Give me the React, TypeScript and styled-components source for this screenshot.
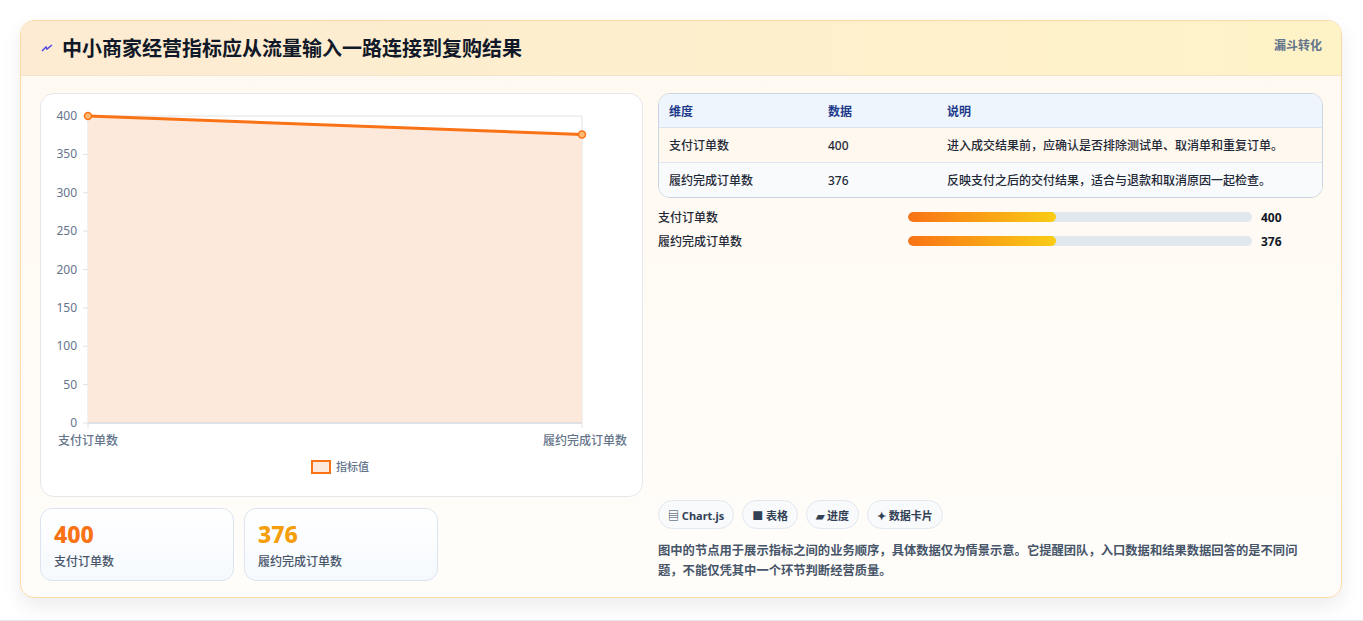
import React from 'react';
import styled, { createGlobalStyle } from 'styled-components';

const GlobalStyle = createGlobalStyle`
  body { margin: 0; background: #f3f4f6; font-family: "Noto Sans", "Noto Sans CJK SC", sans-serif; }
`;

const Page = styled.div`
  width: 1363px; height: 621px; box-sizing: border-box;
  padding: 20px 21px 22px 20px; background: #fff;
  border-bottom: 1px solid #e5e7eb;
`;

const Card = styled.div`
  height: 100%; box-sizing: border-box;
  border: 1px solid #fbd9a8; border-radius: 14px; overflow: hidden;
  background: linear-gradient(180deg, #fff9f0 0%, #fffdfa 100%);
  box-shadow: 0 8px 20px rgba(0,0,0,0.08);
  display: flex; flex-direction: column;
`;

const Header = styled.div`
  height: 55px; flex-shrink: 0; box-sizing: border-box;
  background: linear-gradient(90deg, #fdebd3 0%, #fef3c7 100%);
  border-bottom: 1px solid #f3e3cf;
  display: flex; justify-content: space-between; padding: 0 19px 0 20px;
`;

const Title = styled.h1`
  margin: 0; font-size: 20px; font-weight: 700; color: #111827;
  display: flex; align-items: center; gap: 9px; line-height: 55px;
`;

const Tag = styled.span`
  font-size: 12px; font-weight: 700; color: #64748b; margin-top: 15px;
`;

const Body = styled.div`
  flex: 1; display: grid; grid-template-columns: 603px 1fr; gap: 15px;
  padding: 17px 18px 18px 19px;
`;

const Col = styled.div`
  display: flex; flex-direction: column; min-height: 0;
`;

const ChartPanel = styled.div`
  height: 404px; box-sizing: border-box; background: #fff;
  border: 1px solid #e5e7eb; border-radius: 14px;
`;

const Stats = styled.div`
  display: flex; gap: 10px; margin-top: 11px;
`;

const StatCard = styled.div`
  width: 194px; height: 73px; box-sizing: border-box; padding: 10px 13px;
  border: 1px solid #dbe4ef; border-radius: 12px;
  background: linear-gradient(180deg, #fff 0%, #f5f9fd 100%);
`;

const StatValue = styled.div<{ $c: string }>`
  font-size: 23px; font-weight: 800; color: ${p => p.$c}; line-height: 30px;
`;

const StatLabel = styled.div`
  font-size: 12px; color: #475569; margin-top: 3px; font-weight: 500;
`;

const Table = styled.div`
  border: 1px solid #cbd5e1; border-radius: 12px; overflow: hidden;
`;

const Row = styled.div<{ $bg: string; $head?: boolean }>`
  display: grid; grid-template-columns: 159px 119px 1fr;
  height: ${p => (p.$head ? 33 : 34)}px; align-items: center; padding-left: 10px;
  background: ${p => p.$bg}; font-size: 12px;
  color: ${p => (p.$head ? '#1e3a8a' : '#1f2937')};
  font-weight: ${p => (p.$head ? 600 : 500)};
  & + & { border-top: 1px solid #dbe4ef; }
`;

const Bars = styled.div`
  display: flex; flex-direction: column; gap: 8px; margin-top: 10px;
`;

const BarRow = styled.div`
  display: grid; grid-template-columns: 250px 344px 1fr; align-items: center;
  font-size: 12px; font-weight: 500; color: #1f2937; height: 16px;
`;

const Track = styled.div`
  height: 10px; border-radius: 5px; background: #e2e8f0; overflow: hidden;
`;

const Fill = styled.div`
  height: 100%; border-radius: 5px; background: linear-gradient(90deg, #f97316, #facc15);
`;

const BarNum = styled.span`
  font-weight: 700; padding-left: 9px; color: #111827;
`;

const Chips = styled.div`
  display: flex; gap: 8px; margin-top: auto;
`;

const Chip = styled.span`
  height: 29px; box-sizing: border-box; padding: 0 9px; border-radius: 15px;
  border: 1px solid #e2e8f0; background: #f8fafc;
  display: inline-flex; align-items: center; gap: 3px;
  font-size: 11px; font-weight: 700; color: #334155;
`;

const Note = styled.p`
  margin: 12px 0 0; padding-right: 4px; font-size: 12.3px; line-height: 20px;
  color: #475569; font-weight: 600;
`;

const Chart: React.FC = () => {
  const x0 = 47, x1 = 541, yTop = 22, yBot = 329;
  const ys = [400, 350, 300, 250, 200, 150, 100, 50, 0];
  const yOf = (v: number) => yBot - (v / 400) * (yBot - yTop);
  return (
    <svg width="601" height="402" style={{ display: 'block', fontFamily: 'Noto Sans, Noto Sans CJK SC, sans-serif' }}>
      {ys.map(v => (
        <g key={v}>
          <line x1={x0 - 5} x2={x1} y1={yOf(v)} y2={yOf(v)} stroke="#e2e2e2" />
          <text x={x0 - 11} y={yOf(v) + 4} fontSize="12" fill="#64748b" textAnchor="end">{v}</text>
        </g>
      ))}
      <line x1={x0} x2={x0} y1={yTop} y2={yBot + 5} stroke="#e2e2e2" />
      <line x1={x1} x2={x1} y1={yTop} y2={yBot + 5} stroke="#e2e2e2" />
      <polygon points={`${x0},${yOf(400)} ${x1},${yOf(376)} ${x1},${yBot} ${x0},${yBot}`} fill="#fde9dc" />
      <line x1={x0} x2={x1} y1={yBot} y2={yBot} stroke="#cbd5e1" />
      <line x1={x0} x2={x1} y1={yOf(400)} y2={yOf(376)} stroke="#f97316" strokeWidth="3" />
      <circle cx={x0} cy={yOf(400)} r="3.5" fill="#fdba74" stroke="#f97316" strokeWidth="1.5" />
      <circle cx={x1} cy={yOf(376)} r="3.5" fill="#fdba74" stroke="#f97316" strokeWidth="1.5" />
      <text x={x0} y={351} fontSize="12" fontWeight="500" fill="#64748b" textAnchor="middle">支付订单数</text>
      <text x={x1 + 3} y={351} fontSize="12" fontWeight="500" fill="#64748b" textAnchor="middle">履约完成订单数</text>
      <rect x={271} y={367} width={18} height={12} fill="#fde9dc" stroke="#f97316" strokeWidth="2" />
      <text x={295} y={377} fontSize="11" fontWeight="500" fill="#64748b">指标值</text>
    </svg>
  );
};

export default function App() {
  const rows = [
    { name: '支付订单数', v: 400, d: '进入成交结果前，应确认是否排除测试单、取消单和重复订单。', bg: '#fff8ee' },
    { name: '履约完成订单数', v: 376, d: '反映支付之后的交付结果，适合与退款和取消原因一起检查。', bg: '#f8fafc' },
  ];
  return (
    <>
      <GlobalStyle />
      <Page>
        <Card>
          <Header>
            <Title>
              <svg width="12" height="10" viewBox="0 0 12 10"><path d="M1 8 L5 4 L6 6 L11 2" stroke="#4f46e5" strokeWidth="1.5" fill="none" /></svg>
              中小商家经营指标应从流量输入一路连接到复购结果
            </Title>
            <Tag>漏斗转化</Tag>
          </Header>
          <Body>
            <Col>
              <ChartPanel><Chart /></ChartPanel>
              <Stats>
                <StatCard><StatValue $c="#f97316">400</StatValue><StatLabel>支付订单数</StatLabel></StatCard>
                <StatCard><StatValue $c="#f59e0b">376</StatValue><StatLabel>履约完成订单数</StatLabel></StatCard>
              </Stats>
            </Col>
            <Col>
              <Table>
                <Row $bg="#eef5fd" $head><span>维度</span><span>数据</span><span>说明</span></Row>
                {rows.map(r => (
                  <Row key={r.name} $bg={r.bg}><span>{r.name}</span><span>{r.v}</span><span>{r.d}</span></Row>
                ))}
              </Table>
              <Bars>
                {rows.map(r => (
                  <BarRow key={r.name}>
                    <span>{r.name}</span>
                    <Track><Fill style={{ width: '43%' }} /></Track>
                    <BarNum>{r.v}</BarNum>
                  </BarRow>
                ))}
              </Bars>
              <Chips>
                <Chip>▤ Chart.js</Chip>
                <Chip>■ 表格</Chip>
                <Chip>▰ 进度</Chip>
                <Chip>✦ 数据卡片</Chip>
              </Chips>
              <Note>图中的节点用于展示指标之间的业务顺序，具体数据仅为情景示意。它提醒团队，入口数据和结果数据回答的是不同问题，不能仅凭其中一个环节判断经营质量。</Note>
            </Col>
          </Body>
        </Card>
      </Page>
    </>
  );
}
